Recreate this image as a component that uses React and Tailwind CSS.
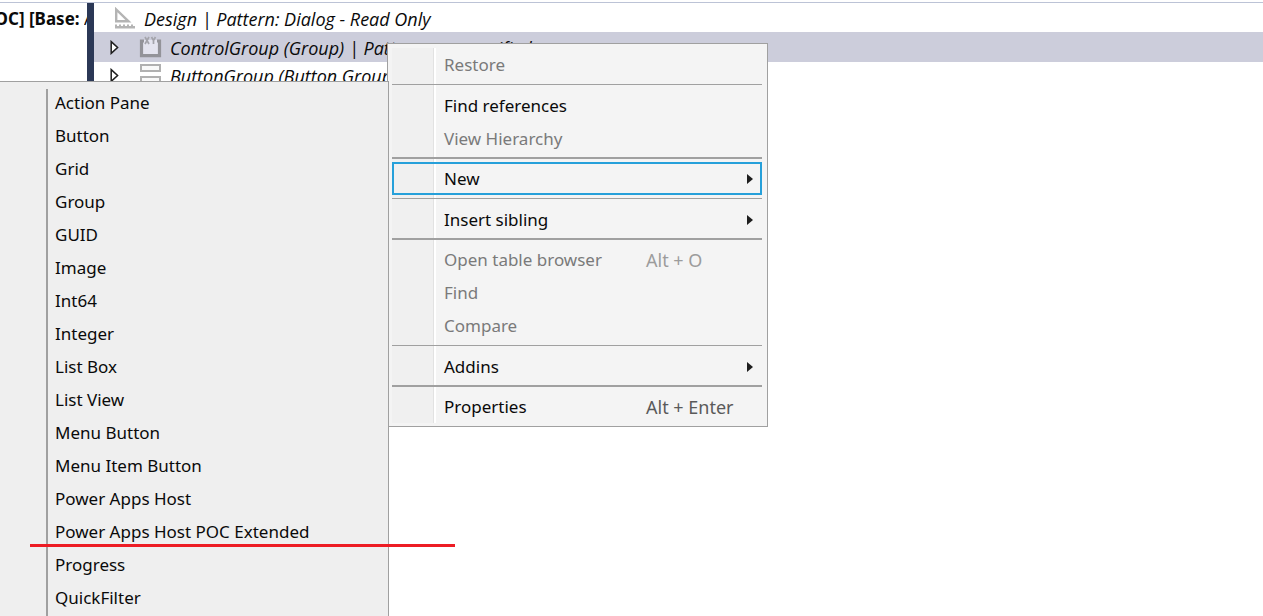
import React from "react";

const controlTypes = [
  "Action Pane",
  "Button",
  "Grid",
  "Group",
  "GUID",
  "Image",
  "Int64",
  "Integer",
  "List Box",
  "List View",
  "Menu Button",
  "Menu Item Button",
  "Power Apps Host",
  "Power Apps Host POC Extended",
  "Progress",
  "QuickFilter",
];

const menuGroups = [
  [{ label: "Restore", disabled: true }],
  [{ label: "Find references" }, { label: "View Hierarchy", disabled: true }],
  [{ label: "New", submenu: true, active: true }],
  [{ label: "Insert sibling", submenu: true }],
  [
    { label: "Open table browser", keys: "Alt + O", disabled: true },
    { label: "Find", disabled: true },
    { label: "Compare", disabled: true },
  ],
  [{ label: "Addins", submenu: true }],
  [{ label: "Properties", keys: "Alt + Enter" }],
];

function Expander() {
  return (
    <svg className="h-[15px] w-[9px] shrink-0" viewBox="0 0 9 15" fill="#fff" stroke="#1e1e1e" strokeWidth="1.5" aria-hidden="true">
      <path d="M1.2 1.6 L7.6 7.5 L1.2 13.4 Z" />
    </svg>
  );
}

function DesignIcon() {
  return (
    <svg className="h-[22px] w-[22px] shrink-0" viewBox="0 0 22 22" aria-hidden="true">
      <path d="M2.2 2.5 V14.3 H14.5 Z" fill="none" stroke="#b4b4b4" strokeWidth="2.4" />
      <path d="M1 17.5 h2 v1.5 h2 v-1.5 h2 v1.5 h2 v-1.5 h2 v1.5 h2 v-1.5 h2 v1.5 h2 v-1.5 h2 v1.5 h2 v2.5 h-20 z" fill="#b4b4b4" />
    </svg>
  );
}

function GroupIcon() {
  return (
    <svg className="h-[23px] w-[23px] shrink-0" viewBox="0 0 23 23" aria-hidden="true">
      <path d="M3 4 H20 V19 H3 Z" fill="#e4e4ef" />
      <path d="M5 5 H2.5 V19.7 H20.5 V5 H18" fill="none" stroke="#939399" strokeWidth="3.2" />
      <path d="M6 1 L10 8 M10 1 L6 8 M12.5 1 L14.5 4.5 L16.5 1 M14.5 4.5 V8" fill="none" stroke="#a4a4ab" strokeWidth="1.7" />
    </svg>
  );
}

function ButtonGroupIcon() {
  return (
    <svg className="h-[22px] w-[23px] shrink-0" viewBox="0 0 23 22" fill="#f9f9f9" stroke="#b0b0b0" strokeWidth="2" aria-hidden="true">
      <rect x="2" y="1" width="19" height="6" />
      <rect x="2" y="13" width="19" height="6" />
    </svg>
  );
}

function MenuItem({ label, keys, submenu, active, disabled }) {
  return (
    <button
      type="button"
      role="menuitem"
      disabled={disabled}
      aria-haspopup={submenu ? "menu" : undefined}
      className={`flex h-[33px] w-full items-center border-2 pr-[7px] pl-[50px] text-left ${
        active ? "border-[#26a0da]" : "border-transparent"
      } ${disabled ? "text-[#7a7a7a]" : "text-[#0a0a0a]"}`}
    >
      <span className="w-[202px] shrink-0">{label}</span>
      {keys && <span className={disabled ? "text-[18px] text-[#9c9c9c]" : "text-[18px] text-[#5a5a5a]"}>{keys}</span>}
      {submenu && (
        <svg className="ml-auto h-[10px] w-[6px]" viewBox="0 0 6 10" fill="#1e1e1e" aria-hidden="true">
          <path d="M0 0 L6 5 L0 10 Z" />
        </svg>
      )}
    </button>
  );
}

function ContextMenu() {
  return (
    <div role="menu" aria-label="Node actions" className="absolute top-[43px] left-[387px] w-[381px] border border-[#a0a0a0] bg-[#f4f4f4] pt-1 pr-[5px] pb-[3px] pl-1">
      <div className="bg-[linear-gradient(to_right,#f0f0f0_41px,#e2e2e2_41px,#e2e2e2_42px,#fff_42px,#fff_44px,transparent_44px)]">
        {menuGroups.map((group, i) => (
          <div key={group[0].label}>
            {i > 0 && (
              <div
                role="separator"
                className={i % 2 === 1 ? "mt-[3px] mb-1 h-px bg-[#a0a0a0]" : "mt-[2px] mb-[3px] h-[2px] bg-[#a0a0a0]"}
              />
            )}
            {group.map((item) => (
              <MenuItem key={item.label} {...item} />
            ))}
          </div>
        ))}
      </div>
    </div>
  );
}

function NewSubmenu() {
  return (
    <div className="absolute top-[81px] bottom-0 left-0 flex w-[389px] overflow-hidden border-t border-r border-[#a0a0a0] bg-[#efefef]">
      <div className="mt-[7px] w-12 shrink-0 border-r-2 border-[#a0a0a0]" />
      <div role="menu" aria-label="New" className="flex-1 pt-1">
        {controlTypes.map((name) => (
          <button key={name} type="button" role="menuitem" className="flex h-[33px] w-full items-center pl-[7px] text-left">
            {name}
          </button>
        ))}
      </div>
    </div>
  );
}

export default function App() {
  return (
    <main className="relative min-h-screen overflow-hidden bg-white pt-[2px] font-['Noto_Sans','Segoe_UI',sans-serif] text-[17px] leading-[24px] whitespace-nowrap text-[#0a0a0a]">
      <div className="flex h-[86px] border-t border-[#bcc3d6]">
        <div className="flex w-[87px] shrink-0 justify-end overflow-hidden">
          <p className="pt-1 font-bold">
            POC] [Base: <span className="inline-block w-[3px] overflow-hidden align-top font-normal">A</span>
          </p>
        </div>
        <div className="w-[7px] shrink-0 bg-[#2b3856]" />
        <div role="tree" aria-label="Design" className="min-w-0 flex-1 font-['Open_Sans','Segoe_UI',sans-serif] text-[18px] italic">
          <div role="treeitem" className="flex h-[29px] items-center gap-2 pl-[20px]">
            <DesignIcon />
            <span className="pt-[2px]">Design | Pattern: Dialog - Read Only</span>
          </div>
          <div role="treeitem" aria-selected="true" className="flex h-[30px] items-center gap-2 bg-[#cccddb] pl-4">
            <Expander />
            <span className="ml-3"><GroupIcon /></span>
            <span className="pt-[2px]">ControlGroup (Group) | Pattern: &lt;unspecified&gt;</span>
          </div>
          <div role="treeitem" className="flex h-[26px] items-center gap-2 pl-4">
            <Expander />
            <span className="ml-3"><ButtonGroupIcon /></span>
            <span className="pt-[2px]">ButtonGroup (Button Group)</span>
          </div>
        </div>
      </div>
      <ContextMenu />
      <NewSubmenu />
      <div className="absolute top-[544px] left-[30px] h-[3px] w-[425px] bg-[#ed1c24]" />
    </main>
  );
}
